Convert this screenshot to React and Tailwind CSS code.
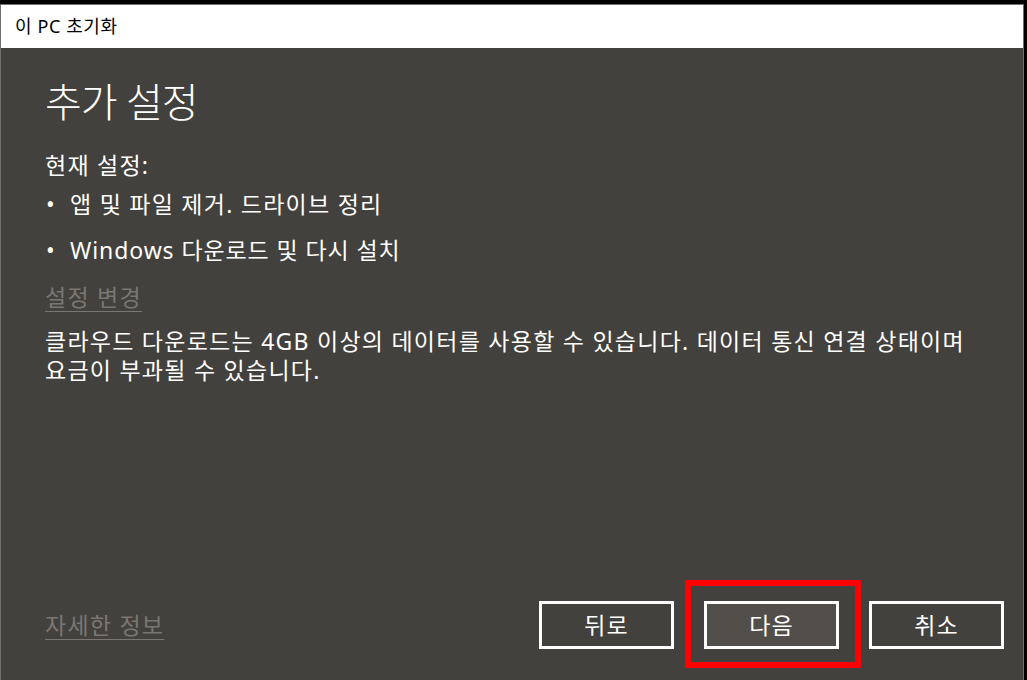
import React from "react";

const font = "font-['Noto_Sans','Noto_Sans_CJK_KR',sans-serif]";

function OutlineButton({ children, filled }) {
  return (
    <button
      className={`w-[135px] h-[48px] border-[3px] border-white text-white text-[23px] leading-none tracking-[1px] flex items-center justify-center ${
        filled ? "bg-[#524e4a]" : "bg-transparent"
      }`}
    >
      {children}
    </button>
  );
}

export default function App() {
  return (
    <div className={`w-[1027px] h-[680px] bg-black pt-[4px] overflow-hidden ${font}`}>
      <div className="w-[1024px] h-[676px] border-l border-r border-t border-[#707070] flex flex-col">
        {/* title bar */}
        <div className="h-[43px] bg-white flex items-center px-[14px] text-[18px] tracking-[0.6px] text-black">
          이 PC 초기화
        </div>

        {/* body */}
        <div className="flex-1 bg-[#43413d] flex flex-col pl-[44px] pr-[19px] text-white">
          <h1 className="pt-[31px] text-[40px] leading-[46px] font-light tracking-[-1px]">
            추가 설정
          </h1>

          <div className="mt-[25px] text-[23px] leading-[30px] tracking-[1.25px]">
            <p>현재 설정:</p>
            <ul className="mt-[9px] space-y-[16px]">
              <li className="flex">
                <span className="w-[25px] pl-[1px]">•</span>
                <span>앱 및 파일 제거. 드라이브 정리</span>
              </li>
              <li className="flex">
                <span className="w-[25px] pl-[1px]">•</span>
                <span className="tracking-[0.9px]">Windows 다운로드 및 다시 설치</span>
              </li>
            </ul>
            <a className="block mt-[17px] w-fit text-[#7a7772] underline decoration-1 underline-offset-[5px]">
              설정 변경
            </a>
            <p className="mt-[15px] leading-[29px] whitespace-nowrap">
              클라우드 다운로드는 4GB 이상의 데이터를 사용할 수 있습니다. 데이터 통신 연결 상태이며
              <br />
              요금이 부과될 수 있습니다.
            </p>
          </div>

          <div className="mt-auto pb-[31px] flex items-center">
            <a className="text-[23px] leading-[30px] tracking-[1.25px] text-[#7a7772] underline decoration-1 underline-offset-[5px]">
              자세한 정보
            </a>
            <div className="ml-auto flex gap-[30px]">
              <OutlineButton>뒤로</OutlineButton>
              <div className="relative">
                <OutlineButton filled>다음</OutlineButton>
                <div className="absolute -left-[19px] -top-[21px] w-[176px] h-[88px] border-[6px] border-[#ff0000] pointer-events-none" />
              </div>
              <OutlineButton>취소</OutlineButton>
            </div>
          </div>
        </div>
      </div>
    </div>
  );
}
